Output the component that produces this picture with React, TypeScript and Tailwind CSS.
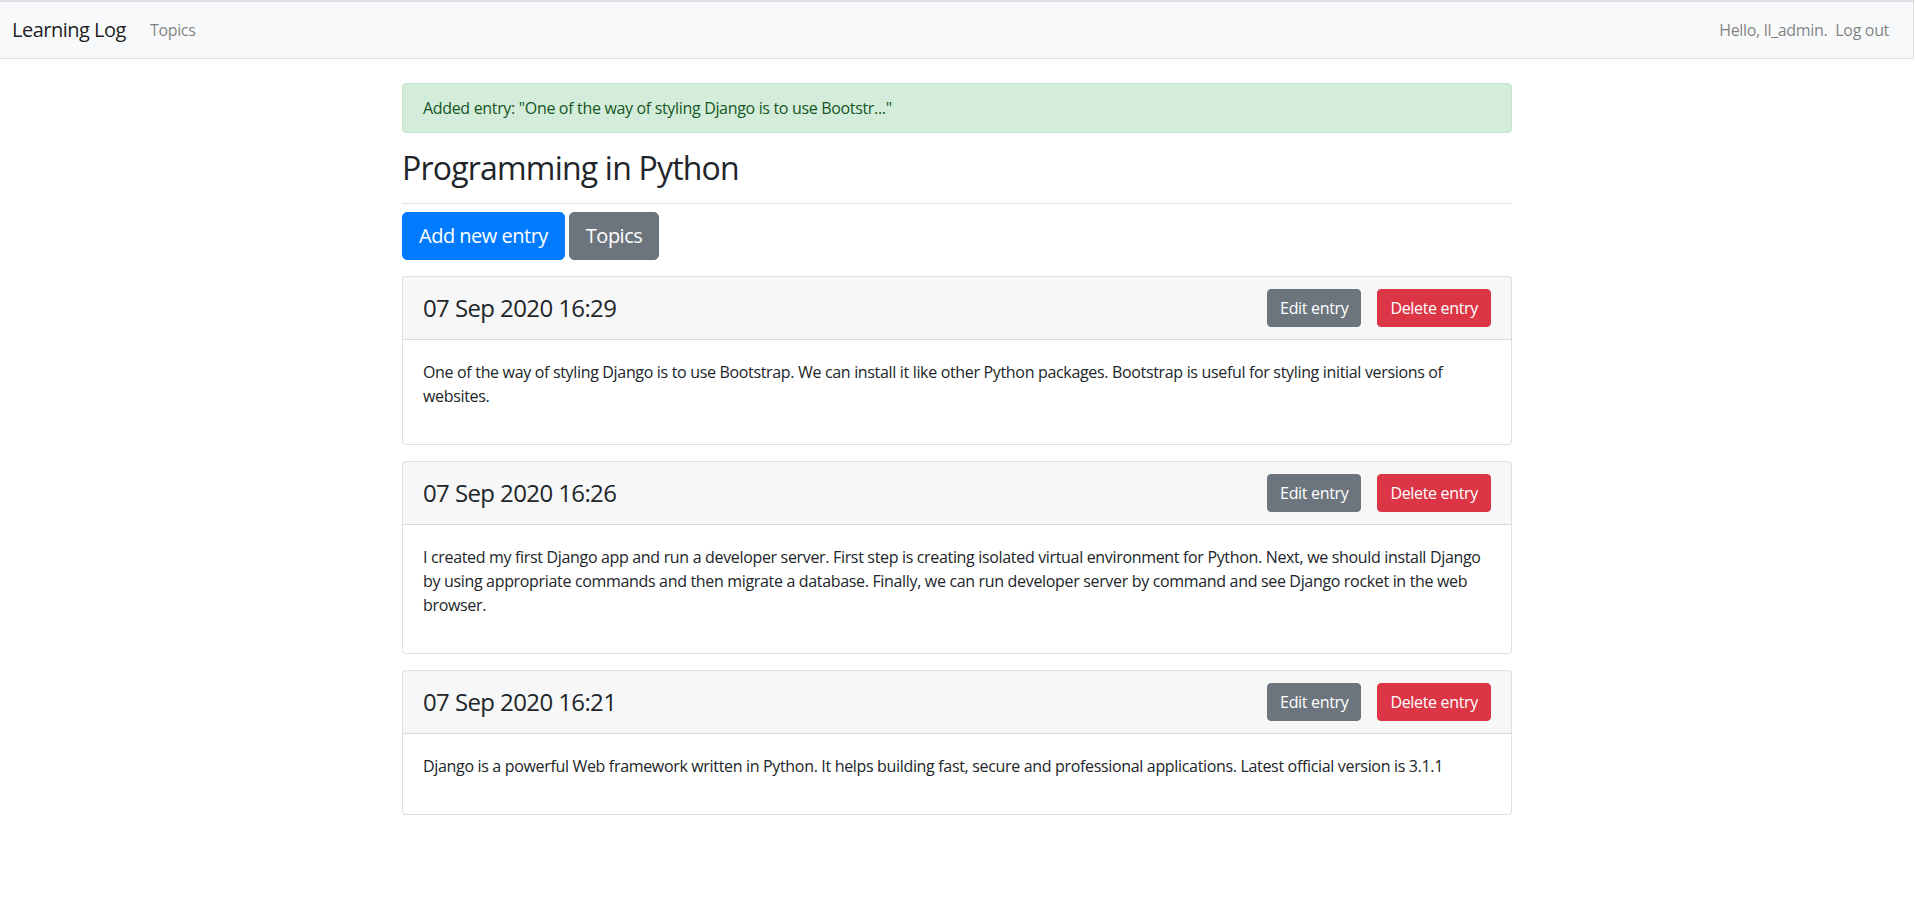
const entries = [
  {
    date: "07 Sep 2020 16:29",
    text: "One of the way of styling Django is to use Bootstrap. We can install it like other Python packages. Bootstrap is useful for styling initial versions of websites.",
  },
  {
    date: "07 Sep 2020 16:26",
    text: "I created my first Django app and run a developer server. First step is creating isolated virtual environment for Python. Next, we should install Django by using appropriate commands and then migrate a database. Finally, we can run developer server by command and see Django rocket in the web browser.",
  },
  {
    date: "07 Sep 2020 16:21",
    text: "Django is a powerful Web framework written in Python. It helps building fast, secure and professional applications. Latest official version is 3.1.1",
  },
];

function Navbar() {
  return (
    <nav className="flex h-[59px] w-[1914px] items-center justify-between border-t-2 border-r border-b border-[#dcdfe3] bg-[#f8f9fa] pl-3 pr-4">
      <div className="flex items-center">
        <a className="mr-4 text-xl leading-[30px] tracking-[-0.5px] text-black/90">Learning Log</a>
        <a className="px-2 text-base text-black/50">Topics</a>
      </div>
      <div className="flex items-center">
        <span className="px-2 text-base text-black/50">Hello, ll_admin.</span>
        <a className="pr-2 text-base text-black/50">Log out</a>
      </div>
    </nav>
  );
}

function EntryCard({ date, text }: { date: string; text: string }) {
  return (
    <div className="mb-4 rounded border border-black/[0.125] bg-white">
      <div className="flex items-center justify-between border-b border-black/[0.125] bg-black/[0.03] px-5 py-3">
        <h4 className="text-2xl leading-[1.2] font-normal tracking-[-0.6px]">{date}</h4>
        <div className="flex gap-4">
          <button className="rounded border border-[#6c757d] bg-[#6c757d] px-3 py-1.5 text-base leading-6 text-white">Edit entry</button>
          <button className="rounded border border-[#dc3545] bg-[#dc3545] px-3 py-1.5 text-base leading-6 text-white">Delete entry</button>
        </div>
      </div>
      <div className="p-5">
        <p className="mb-4 text-base leading-6">{text}</p>
      </div>
    </div>
  );
}

export default function App() {
  return (
    <div className="min-h-screen bg-white font-['Segoe_UI','Open_Sans',sans-serif] tracking-[-0.33px] text-[#212529]">
      <Navbar />
      <div className="w-[1914px]">
        <main className="mx-auto w-[1110px] pt-6">
          <div className="mb-4 rounded border border-[#c3e6cb] bg-[#d4edda] px-5 py-3 text-base leading-6 text-[#155724]">
            Added entry: "One of the way of styling Django is to use Bootstr..."
          </div>
          <div className="mb-2 border-b border-[#dee2e6] pb-2">
            <h2 className="mb-2 text-[32px] leading-[1.2] font-normal tracking-[-0.8px]">Programming in Python</h2>
          </div>
          <p className="mb-4 flex gap-1">
            <button className="rounded-[5px] border border-[#007bff] bg-[#007bff] px-4 py-2 text-xl leading-[30px] tracking-[-0.5px] text-white">Add new entry</button>
            <button className="rounded-[5px] border border-[#6c757d] bg-[#6c757d] px-4 py-2 text-xl leading-[30px] tracking-[-0.5px] text-white">Topics</button>
          </p>
          {entries.map((e) => (
            <EntryCard key={e.date} date={e.date} text={e.text} />
          ))}
        </main>
      </div>
    </div>
  );
}
